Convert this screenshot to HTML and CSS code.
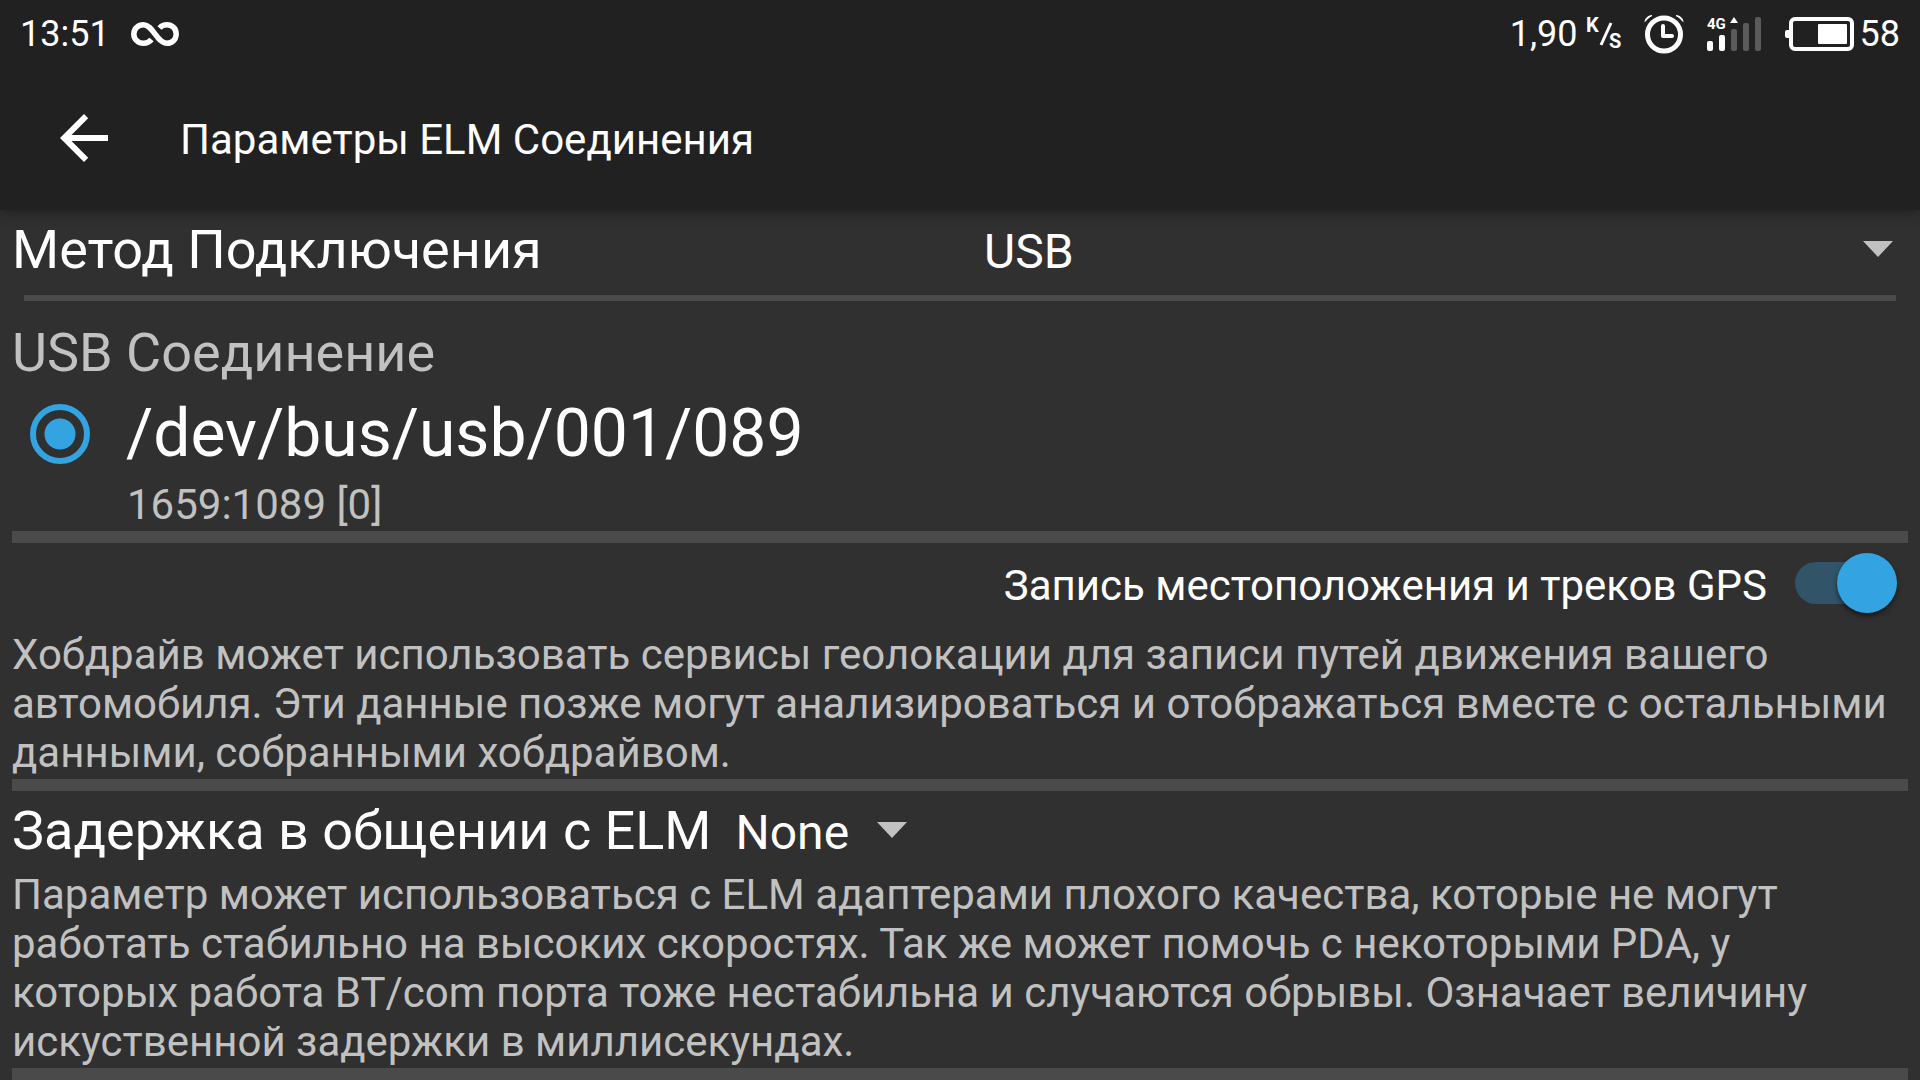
FILE: index.html
```
<!DOCTYPE html>
<html lang="ru">
  <head>
    <meta charset="UTF-8" />
    <meta name="viewport" content="width=device-width, initial-scale=1.0" />
    <title>Параметры ELM Соединения</title>
    <link rel="stylesheet" href="styles.css">
  </head>
  <body>
    <header class="top">
      <div class="status">
        <span>13:51</span>
        <svg class="infinity" width="48" height="26" viewBox="0 0 48 26" fill="none" stroke="#fff" stroke-width="5.500">
          <path d="M20.500 18.500C18.500 21 16 22.300 12.500 22.300C7.500 22.300 2.800 18.500 2.800 13C2.800 7.500 7.500 3.700 12.500 3.700C22 3.700 26 22.300 36 22.300C41 22.300 45.200 18.500 45.200 13C45.200 7.500 41 3.700 36 3.700C33 3.700 30.500 4.800 28.500 7" />
        </svg>
        <div class="status-right">
          <span>1,90</span>
          <svg class="speed" width="40" height="40" viewBox="0 0 40 40">
            <text x="0" y="18" class="speed-text">K</text>
            <path d="M15 31L25 9" stroke="#fff" stroke-width="3" />
            <text x="23" y="34" class="speed-text">S</text>
          </svg>
          <svg class="alarm" width="40" height="40" viewBox="0 0 40 40" fill="none" stroke="#fff">
            <circle cx="20" cy="20.500" r="16.500" stroke-width="5" />
            <path d="M19 12V22H28" stroke-width="4" stroke-linecap="round" stroke-linejoin="round" />
            <path d="M1 7.500Q2 2 8 1.500Q4 3.500 1 7.500ZM39 7.500Q38 2 32 1.500Q36 3.500 39 7.500Z" fill="#fff" stroke-width="1" />
          </svg>
          <svg class="signal" width="54" height="36" viewBox="0 0 54 36" fill="#fff">
            <text x="0" y="13" class="signal-text">4G</text>
            <path d="M27 1L31 7H23Z" />
            <rect x="0" y="25" width="6" height="10" rx="2" />
            <rect x="12" y="19" width="6" height="16" rx="2" />
            <g fill="#5a5a5a">
              <rect x="24" y="13" width="6" height="22" rx="2" />
              <rect x="36" y="7" width="6" height="28" rx="2" />
              <rect x="48" y="1" width="6" height="34" rx="2" />
            </g>
          </svg>
          <svg class="battery" width="70" height="36" viewBox="0 0 70 36" fill="#fff">
            <rect x="0" y="14" width="6" height="8" rx="2" />
            <rect x="6" y="3" width="61" height="30" rx="4" fill="none" stroke="#fff" stroke-width="4" />
            <rect x="33" y="8" width="29" height="20" rx="1" />
          </svg>
          <span>58</span>
        </div>
      </div>
      <div class="appbar">
        <button class="back" type="button" aria-label="Назад">
          <svg width="48" height="48" viewBox="0 0 48 48">
            <path d="M48 21H11.500L28.200 4.200L24 0L0 24L24 48L28.200 43.800L11.500 27H48Z" fill="#fff" />
          </svg>
        </button>
        <h1>Параметры ELM Соединения</h1>
      </div>
    </header>
    <main>
      <section class="method">
        <label for="method">Метод Подключения</label>
        <div class="spinner">
          <select id="method">
            <option>USB</option>
          </select>
        </div>
      </section>
      <section class="usb">
        <h2>USB Соединение</h2>
        <div class="device">
          <input type="radio" id="device" name="device" checked />
          <label for="device">/dev/bus/usb/001/089</label>
        </div>
        <p class="device-id">1659:1089 [0]</p>
      </section>
      <section>
        <div class="gps">
          <label for="gps">Запись местоположения и треков GPS</label>
          <input type="checkbox" id="gps" class="switch" checked />
        </div>
        <p>Хобдрайв может использовать сервисы геолокации для записи путей движения вашего автомобиля. Эти данные позже могут анализироваться и отображаться вместе с остальными данными, собранными хобдрайвом.</p>
      </section>
      <section>
        <div class="delay">
          <label for="delay">Задержка в общении с ELM</label>
          <div class="spinner">
            <select id="delay">
              <option>None</option>
            </select>
          </div>
        </div>
        <p>Параметр может использоваться с ELM адаптерами плохого качества, которые не могут работать стабильно на высоких скоростях. Так же может помочь с некоторыми PDA, у которых работа BT/com порта тоже нестабильна и случаются обрывы. Означает величину искуственной задержки в миллисекундах.</p>
      </section>
    </main>
  </body>
</html>
```
FILE: styles.css
```
* {
  box-sizing: border-box;
}
body {
  margin: 0;
  background-color: #303030;
  color: white;
  font-family: Roboto, sans-serif;
  font-size: 42px;
  line-height: 49px;
}
h1,
h2,
p {
  margin: 0;
  font-size: 42px;
  font-weight: 400;
}
p {
  padding-right: 12px;
  color: #c1c1c1;
}
.top {
  background-color: #212121;
  box-shadow: 0 2px 12px rgba(0, 0, 0, 0.4);
}
.status {
  display: flex;
  align-items: center;
  height: 66px;
  padding: 2px 20px 0;
  font-size: 36px;
}
.infinity {
  margin-left: 21px;
}
.status-right {
  display: flex;
  align-items: center;
  margin-left: auto;
}
.speed {
  margin-left: 8px;
}
.speed-text {
  fill: white;
  font-size: 20px;
  font-weight: 700;
}
.alarm {
  margin-left: 18px;
}
.signal {
  margin-left: 23px;
}
.signal-text {
  font-size: 15px;
  font-weight: 700;
}
.battery {
  margin: 0 5px 0 24px;
}
.appbar {
  display: flex;
  align-items: center;
  height: 144px;
  padding-left: 60px;
}
.back {
  display: flex;
  margin-right: 72px;
  padding: 0;
  border: 0;
  background: none;
}
.appbar h1 {
  padding-top: 2px;
}
section {
  padding-bottom: 2px;
  margin: 0 12px;
  border-bottom: 12px solid #4a4a4a;
}
.method {
  display: grid;
  grid-template-columns: 1fr 1fr;
  align-items: baseline;
  margin: 0;
  padding: 0 12px;
  border: 0;
}
.method label,
.delay label {
  font-size: 54px;
  line-height: 79px;
}
.method::after {
  content: "";
  grid-column: 1 / 3;
  height: 6px;
  margin: 6px 12px 0;
  background-color: #4a4a4a;
}
.spinner {
  position: relative;
  padding-left: 24px;
}
.spinner::after {
  content: "";
  position: absolute;
  right: 15px;
  top: 17px;
  border: 15px solid transparent;
  border-top: 16px solid #c1c1c1;
  border-bottom: 0;
  pointer-events: none;
}
select {
  appearance: none;
  width: 100%;
  padding: 0 72px 0 0;
  border: 0;
  background: none;
  color: white;
  font-family: inherit;
  font-size: 48px;
  line-height: 56px;
}
.usb h2 {
  padding-top: 17px;
  color: #c1c1c1;
  font-size: 54px;
  line-height: 70px;
}
.device {
  display: flex;
  align-items: center;
  padding-left: 18px;
  font-size: 66px;
  line-height: 92px;
}
.device input {
  appearance: none;
  width: 60px;
  height: 60px;
  margin: 0 36px 0 0;
  border: 6px solid #33a3e2;
  border-radius: 50%;
  background: radial-gradient(circle, #33a3e2 15px, transparent 16px);
}
.device-id {
  padding-left: 115px;
}
.gps {
  display: flex;
  align-items: center;
  justify-content: flex-end;
  height: 87px;
  padding: 0 11px 2px 0;
}
.switch {
  appearance: none;
  position: relative;
  width: 102px;
  height: 66px;
  margin: 0 0 0 28px;
}
.switch::before {
  content: "";
  position: absolute;
  top: 9px;
  left: 0;
  width: 90px;
  height: 42px;
  border-radius: 21px;
  background-color: #315468;
}
.switch::after {
  content: "";
  position: absolute;
  top: 0;
  right: 0;
  width: 60px;
  height: 60px;
  border-radius: 50%;
  background-color: #33a3e2;
  box-shadow: 0 3px 5px rgba(0, 0, 0, 0.5);
}
.delay {
  display: flex;
  align-items: baseline;
}
```
